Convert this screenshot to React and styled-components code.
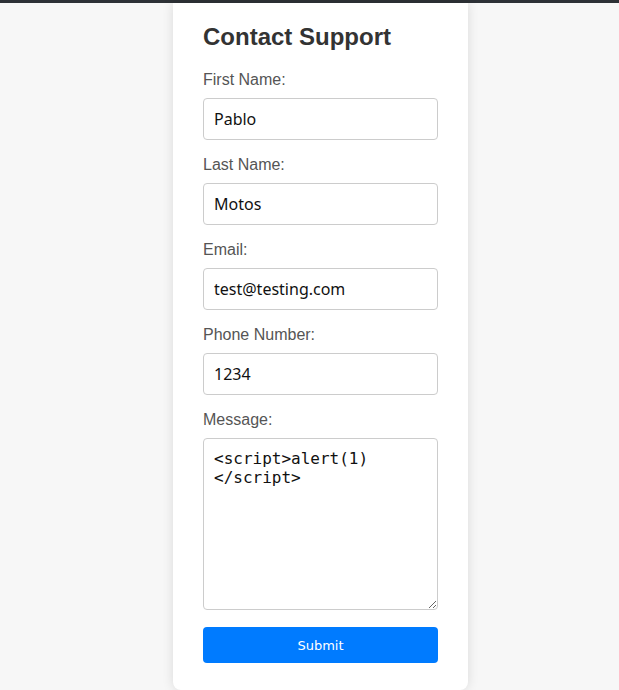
import React from "react";
import styled, { createGlobalStyle } from "styled-components";

const Global = createGlobalStyle`
  html, body { margin: 0; padding: 0; }
  body { background: #f7f7f7; font-family: "Liberation Sans", Arial, sans-serif; }
`;

const TopBar = styled.div`
  height: 3px;
  background: #2d3136;
`;

const Page = styled.div`
  display: flex;
  justify-content: center;
  padding-left: 22px;
`;

const Card = styled.form`
  width: 295px;
  box-sizing: border-box;
  background: #fff;
  padding: 20px 30px 27px;
  border-radius: 0 0 8px 8px;
  box-shadow: 0 0 12px rgba(0, 0, 0, 0.12);
`;

const Title = styled.h2`
  margin: 0 0 20px;
  font-size: 24px;
  font-weight: bold;
  color: #333;
`;

const Label = styled.label`
  display: block;
  font-size: 16px;
  color: #555;
  margin-bottom: 9px;
`;

const Field = styled.input`
  display: block;
  width: 100%;
  box-sizing: border-box;
  height: 42px;
  padding: 10px;
  margin: 0 0 16px;
  border: 1px solid #ccc;
  border-radius: 4px;
  font-family: "Noto Sans", sans-serif;
  font-size: 16px;
  color: #111;
  outline: none;
`;

const Area = styled.textarea`
  display: block;
  width: 100%;
  box-sizing: border-box;
  height: 172px;
  padding: 10px;
  margin: 0 0 17px;
  border: 1px solid #ccc;
  border-radius: 4px;
  font-family: "DejaVu Sans Mono", monospace;
  font-size: 16px;
  line-height: 19px;
  color: #111;
  outline: none;
`;

const Submit = styled.button`
  display: block;
  width: 100%;
  height: 36px;
  border: none;
  border-radius: 4px;
  background: #007bff;
  color: #fff;
  font-family: "DejaVu Sans", sans-serif;
  font-size: 13px;
  cursor: pointer;
`;

const fields = [
  { id: "first", label: "First Name:", value: "Pablo" },
  { id: "last", label: "Last Name:", value: "Motos" },
  { id: "email", label: "Email:", value: "test@testing.com" },
  { id: "phone", label: "Phone Number:", value: "1234" },
];

export default function App() {
  return (
    <>
      <Global />
      <TopBar />
      <Page>
        <Card onSubmit={(e) => e.preventDefault()}>
          <Title>Contact Support</Title>
          {fields.map((f) => (
            <React.Fragment key={f.id}>
              <Label htmlFor={f.id}>{f.label}</Label>
              <Field id={f.id} defaultValue={f.value} />
            </React.Fragment>
          ))}
          <Label htmlFor="msg">Message:</Label>
          <Area id="msg" defaultValue={"<script>alert(1)\n</script>"} />
          <Submit type="submit">Submit</Submit>
        </Card>
      </Page>
    </>
  );
}
